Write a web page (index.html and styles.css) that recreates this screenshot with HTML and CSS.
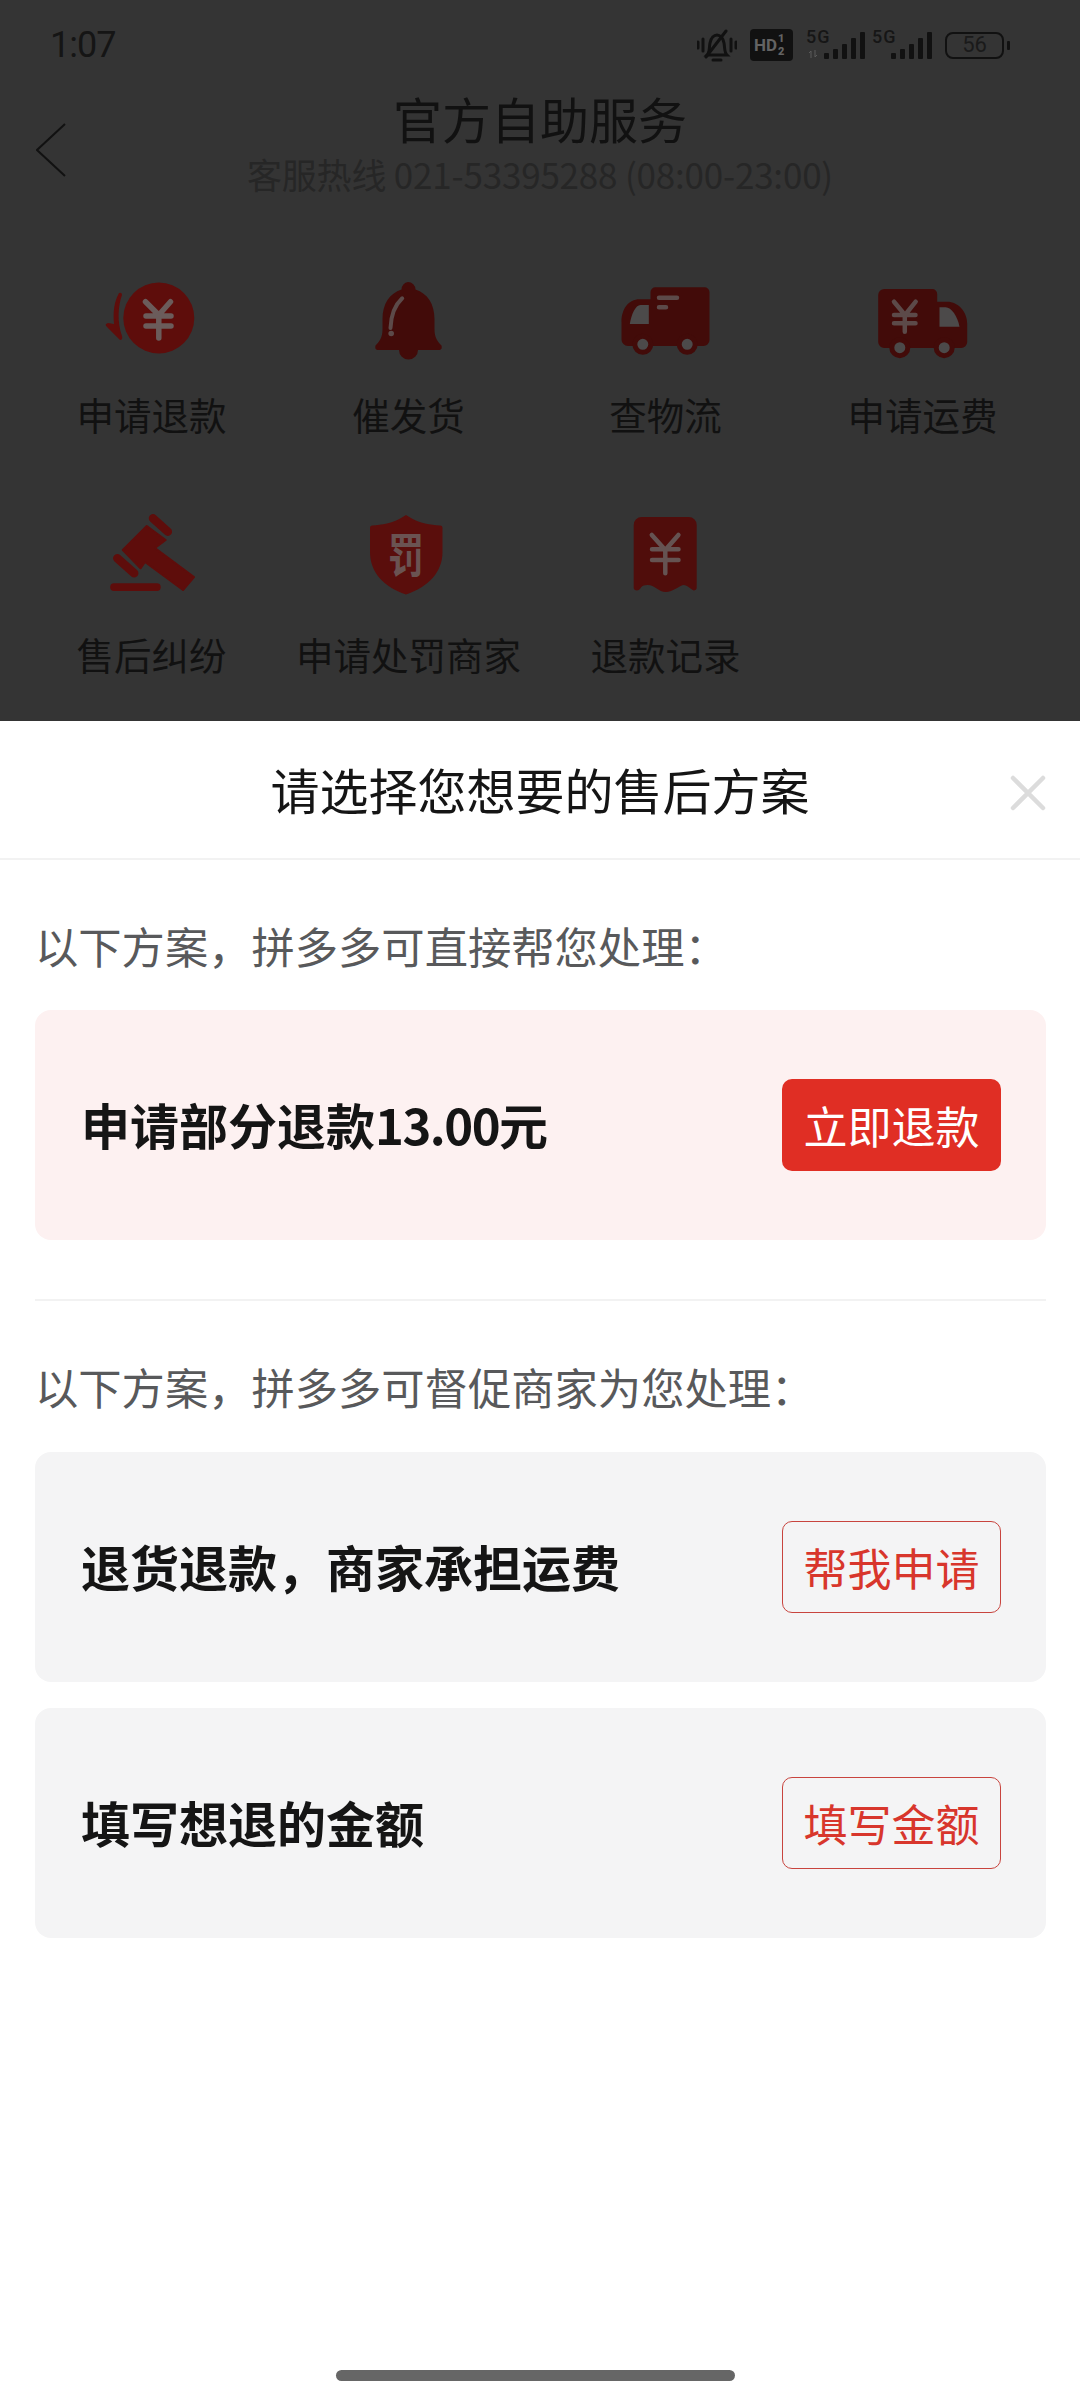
FILE: index.html
```html
<!DOCTYPE html>
<html lang="zh">
<head>
<meta charset="utf-8">
<title>官方自助服务</title>
<link rel="stylesheet" href="styles.css">
</head>
<body>
<div class="page">
  <div class="backdrop">
    <div class="status">
      <span class="time">1:07</span>
      <div class="status-icons">
        <svg class="i-mute" viewBox="0 0 40 34"><g fill="none" stroke="#111" stroke-width="3" stroke-linecap="round"><path d="M1 13v6M6 10v12M34 10v12M39 13v6"/><path d="M10 26c3-3 2-7 3-12 1-5 4-8 7-8s6 3 7 8c1 5 0 9 3 12z"/><path d="M9 28L29 2"/><path d="M16 31h8" stroke-width="3"/></g></svg>
        <div class="hd"><span class="hd-t">HD</span><span class="hd-n"><b>1</b><b>2</b></span></div>
        <div class="sig sig-a">
          <span class="sig-t">5G</span>
          <svg class="updown" viewBox="0 0 10 8"><path d="M3 8V1L1 3M7 0v7l2-2" fill="none" stroke="#5a5a5a" stroke-width="1"/></svg>
          <span class="bars"><i class="b1"></i><i class="b2"></i><i class="b3"></i><i class="b4"></i><i class="b5"></i></span>
        </div>
        <div class="sig sig-b">
          <span class="sig-t">5G</span>
          <span class="bars"><i class="b1"></i><i class="b2"></i><i class="b3"></i><i class="b4"></i><i class="b5"></i></span>
        </div>
        <div class="batt"><span class="batt-box">56</span><span class="batt-tip"></span></div>
      </div>
    </div>
    <div class="nav">
      <svg class="back" viewBox="0 0 30 54"><path d="M29 1L1 27l28 26" fill="none" stroke="#111" stroke-width="2"/></svg>
      <div class="nav-title">官方自助服务</div>
      <div class="nav-sub">客服热线 021-53395288 (08:00-23:00)</div>
    </div>
    <div class="grid">
      <div class="tool">
        <svg class="ico" viewBox="0 0 100 92"><circle cx="56.800" cy="46" r="35.500" fill="#5e0d0b"/><path d="M17 21q3-1 3 2C16 34 15 50 20 64q1 4-2 4L5 55q-3-3 1-4l6 1C11 40 12 30 17 21z" fill="#5e0d0b"/><path d="M43.500 29.700L56.800 43 68.500 29.700M44 44h25M44 54h25M56.800 43v23" fill="none" stroke="#6b5c5b" stroke-width="5.500" stroke-linecap="round" stroke-linejoin="round"/></svg>
        <span class="tool-label">申请退款</span>
      </div>
      <div class="tool">
        <svg class="ico" viewBox="0 0 100 92"><path d="M49 10a7.500 7.500 0 0 1 7.500 7.500c12 4 19 14 19 30v10c0 8 3 12 7 16q1 4-2 4.500H59a9.500 9.500 0 0 1-19 0H18.500q-3-.5-2-4.500c4-4 7-8 7-16v-10c0-16 7-26 19-30a7.500 7.500 0 0 1 6.500-7.500z" fill="#420b09"/><path d="M43.200 26.300C36 33 32 43 31.500 56" fill="none" stroke="#5c4a49" stroke-width="4" stroke-linecap="round"/><circle cx="32.200" cy="61.500" r="2.800" fill="#5c4a49"/></svg>
        <span class="tool-label">催发货</span>
      </div>
      <div class="tool">
        <svg class="ico" viewBox="0 0 100 92"><path d="M34.500 20.300a5 5 0 0 1 5-5h49a5 5 0 0 1 5 5V68a6 6 0 0 1-6 6H12a6.500 6.500 0 0 1-6.500-6.500V50c0-13 7-22.700 18-22.700h11z" fill="#420b09"/><path d="M32.800 33h-8.300c-5 0-9 9-10.700 19h19z" fill="#4c4a4a"/><circle cx="26.800" cy="72.300" r="8" fill="#4c4a4a" stroke="#420b09" stroke-width="5"/><circle cx="71.200" cy="72.300" r="8" fill="#4c4a4a" stroke="#420b09" stroke-width="5"/><path d="M43 25.700h18M43 35.300h7" stroke="#5c4a49" stroke-width="4.500" stroke-linecap="round"/></svg>
        <span class="tool-label">查物流</span>
      </div>
      <div class="tool">
        <svg class="ico" viewBox="0 0 100 92"><path d="M5.200 23a6 6 0 0 1 6-6h48a5 5 0 0 1 5 5v7.700h10c11 0 20 10 20 22V70a6 6 0 0 1-6 6H11.200a6 6 0 0 1-6-6z" fill="#420b09"/><path d="M66.500 35.300h6c6 0 12 9 14 19.400h-20z" fill="#4c4a4a"/><circle cx="26.800" cy="75.700" r="8" fill="#4c4a4a" stroke="#420b09" stroke-width="5"/><circle cx="71.200" cy="75.700" r="8" fill="#4c4a4a" stroke="#420b09" stroke-width="5"/><path d="M21 29.700l11 13.300 10.700-13.300M21 43h21.500M21 51.300h21.500M31.800 43v16.700" fill="none" stroke="#5c4a49" stroke-width="4.500" stroke-linecap="round" stroke-linejoin="round"/></svg>
        <span class="tool-label">申请运费</span>
      </div>
      <div class="tool">
        <svg class="ico" viewBox="0 0 100 92"><g fill="#5e0d0b"><rect x="8.200" y="71.300" width="50.500" height="7.700" rx="3.800"/><path d="M44.800 14L63.700 28 53 36 92 65 81 78 43 50 38.500 56.300 20.800 38z" stroke="#5e0d0b" stroke-width="2" stroke-linejoin="round"/></g><path d="M51 6.300L65.800 19.700M15.300 46.300L32.200 61.300" fill="none" stroke="#5e0d0b" stroke-width="8.500" stroke-linecap="round"/></svg>
        <span class="tool-label">售后纠纷</span>
      </div>
      <div class="tool">
        <svg class="ico" viewBox="0 0 100 92"><path d="M47 3l5 3c8 5 20 7 29 7.500 2 0 2.500 1 2.500 3V40c0 20-14 35-36.500 42.500C24.500 75 11 60 11 40V16.500c0-2 .5-3 2.500-3C22 13 34 11 42 6z" fill="#5a0e0c"/><text class="ico-char" transform="translate(47 60) scale(1 1.300)" text-anchor="middle">罚</text></svg>
        <span class="tool-label">申请处罚商家</span>
      </div>
      <div class="tool">
        <svg class="ico" viewBox="0 0 100 92"><path d="M17.700 13a8 8 0 0 1 8-8h47a8 8 0 0 1 8 8v63c0 2-3 3-4 2-3-2-6-5-9-5s-11 7-18 7-11-7-18-7-6 3-9 5c-2 1-5 0-5-2z" fill="#500d0b"/><path d="M35.800 23L49.300 38 62.400 23M36 37.300h26.500M36 48h26.500M49.300 38v23.300" fill="none" stroke="#655352" stroke-width="4.500" stroke-linecap="round" stroke-linejoin="round"/></svg>
        <span class="tool-label">退款记录</span>
      </div>
    </div>
  </div>
  <div class="sheet">
    <div class="sheet-head">
      <div class="sheet-title">请选择您想要的售后方案</div>
      <svg class="close" viewBox="0 0 36 36"><path d="M3 3l30 30M33 3L3 33" stroke="#dcdcdc" stroke-width="4.500" stroke-linecap="round"/></svg>
    </div>
    <div class="sec first">
      <div class="sec-label">以下方案，拼多多可直接帮您处理：</div>
      <div class="card card-pink">
        <span class="card-text">申请部分退款<span class="num">13.00</span>元</span>
        <span class="btn btn-solid">立即退款</span>
      </div>
    </div>
    <div class="rule"></div>
    <div class="sec second">
      <div class="sec-label">以下方案，拼多多可督促商家为您处理：</div>
      <div class="card">
        <span class="card-text">退货退款，商家承担运费</span>
        <span class="btn btn-line">帮我申请</span>
      </div>
      <div class="card">
        <span class="card-text">填写想退的金额</span>
        <span class="btn btn-line">填写金额</span>
      </div>
    </div>
    <div class="home"></div>
  </div>
</div>
</body>
</html>
```

FILE: styles.css
```css
* { box-sizing: border-box; }
html, body { margin: 0; padding: 0; }
body { font-family: "Noto Sans CJK SC", "Noto Sans", sans-serif; }
.page { width: 1080px; height: 2400px; display: flex; flex-direction: column; overflow: hidden; background: #fff; }

.backdrop { height: 721px; background: #343434; color: #111; flex: none; }
.status { height: 90px; padding: 26px 70px 0 50px; display: flex; justify-content: space-between; align-items: flex-start; }
.time { font-family: Roboto, sans-serif; font-size: 36px; line-height: 38px; letter-spacing: -1px; color: #151515; }
.status-icons { display: flex; align-items: flex-start; margin-top: 3px; }
.i-mute { width: 40px; height: 34px; flex: none; }
.hd { width: 43px; height: 32px; margin-left: 13px; background: #111; border-radius: 4px; color: #636363; display: flex; align-items: center; padding-left: 4px; font-family: Roboto, sans-serif; font-weight: 700; }
.hd-t { font-size: 17px; line-height: 17px; }
.hd-n { display: flex; flex-direction: column; font-size: 11px; line-height: 13px; margin-left: 1px; }
.hd-n b { display: block; }
.sig { position: relative; height: 31px; }
.sig-a { width: 59px; margin-left: 13px; }
.sig-b { width: 60px; margin-left: 7px; }
.sig-t { position: absolute; left: 0; top: -1px; font-family: Roboto, sans-serif; font-size: 18px; font-weight: 500; line-height: 17px; letter-spacing: 1px; color: #161616; }
.updown { position: absolute; left: 2px; bottom: 2px; width: 10px; height: 8px; }
.bars { position: absolute; right: 0; bottom: 1px; display: flex; align-items: flex-end; gap: 4px; }
.bars i { display: block; width: 5px; background: #111; border-radius: 1px; }
.b1 { height: 6px; } .b2 { height: 10px; } .b3 { height: 15px; } .b4 { height: 21px; } .b5 { height: 27px; }
.batt { display: flex; align-items: center; gap: 3px; margin: 3px 0 0 13px; }
.batt-box { width: 59px; height: 27px; border: 2.500px solid #111; border-radius: 8px; font-family: Roboto, sans-serif; font-size: 22px; line-height: 22px; text-align: center; color: #1a1a1a; }
.batt-tip { width: 3px; height: 9px; background: #111; border-radius: 1px; }

.nav { position: relative; height: 110px; text-align: center; }
.back { position: absolute; left: 36px; top: 33px; width: 30px; height: 54px; }
.nav-title { font-size: 49px; line-height: 52px; padding-top: 2px; color: #111; }
.nav-sub { font-size: 35px; line-height: 44px; margin-top: 8px; letter-spacing: -0.2px; color: #262626; }

.grid { display: grid; grid-template-columns: repeat(4, 257px); padding: 72px 0 0 23px; row-gap: 76px; }
.tool { display: flex; flex-direction: column; align-items: center; height: 164px; }
.ico { width: 100px; height: 92px; flex: none; }
.ico-char { font-family: "Noto Sans CJK SC", sans-serif; font-size: 36px; font-weight: 700; fill: #6a5352; }
.tool-label { font-size: 37.500px; line-height: 44px; margin-top: 28px; color: #111; white-space: nowrap; }

.sheet { position: relative; flex: 1; background: #fff; }
.sheet-head { position: relative; height: 139px; border-bottom: 2px solid #f2f2f2; display: flex; align-items: center; justify-content: center; padding-bottom: 2px; }
.sheet-title { font-size: 49px; line-height: 60px; color: #151515; }
.close { position: absolute; right: 34px; top: 54px; width: 36px; height: 36px; }

.sec { padding: 0 34px 0 35px; }
.sec.first { padding-top: 60px; }
.sec.second { padding-top: 60px; }
.sec-label { font-size: 43.300px; line-height: 51px; color: #58595b; white-space: nowrap; }
.card { height: 230px; margin-top: 26px; background: #f4f4f5; border-radius: 16px; display: flex; align-items: center; justify-content: space-between; padding: 0 45px 0 46px; }
.sec-label + .card { margin-top: 40px; }
.sec-label + .card-pink { margin-top: 39px; }
.card-pink { background: #fdf1f1; }
.card-text { font-size: 49px; font-weight: 700; line-height: 60px; padding-bottom: 3px; color: #151515; white-space: nowrap; }
.num { letter-spacing: -1.500px; }
.btn { width: 219px; height: 92px; border-radius: 10px; display: flex; align-items: center; justify-content: center; font-size: 44px; padding-bottom: 1px; white-space: nowrap; }
.btn-solid { background: #e02e24; color: #fff; }
.btn-line { border: 1.500px solid #c8443e; color: #d8362c; }
.rule { height: 2px; background: #f2f2f2; margin: 59px 34px 0 35px; }
.home { position: absolute; left: 336px; top: 1649px; width: 399px; height: 11px; border-radius: 6px; background: #666; }
```
